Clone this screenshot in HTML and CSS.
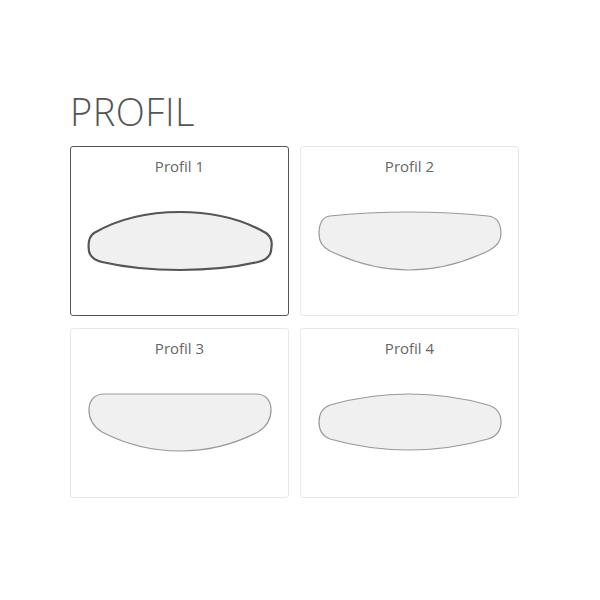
FILE: index.html
```html
<!DOCTYPE html>
<html lang="fr">
<head>
    <meta charset="UTF-8">
    <meta name="viewport" content="width=device-width, initial-scale=1.0">
    <title>Profil</title>
    <link rel="stylesheet" href="styles.css">
</head>
<body>

    <div class="page">
        <h1>PROFIL</h1>

        <!-- choix du profil -->
        <div class="grid">
            <div class="card selected">
                <div class="label">Profil 1</div>
                <svg class="shape" viewBox="0 0 184 62" width="184" height="62">
                    <path d="M 6,22 C 30,8 60,1 92,1 C 124,1 154,8 178,22 C 185,27 184,34 183,40 C 182,46 178,49 170,51 C 145,57 120,59 92,59 C 64,59 40,57 14,51 C 6,49 2,46 1,40 C 0,33 0,26 6,22 Z"/>
                </svg>
            </div>
            <div class="card">
                <div class="label">Profil 2</div>
                <svg class="shape" viewBox="0 0 184 62" width="184" height="62">
                    <path d="M 12,5 C 40,2 65,1 91,1 C 117,1 142,2 170,5 C 180,6 183,14 183,23 C 183,31 178,36 170,40 C 145,52 120,59 91,59 C 62,59 37,52 12,40 C 4,36 1,31 1,23 C 1,14 4,6 12,5 Z"/>
                </svg>
            </div>
            <div class="card">
                <div class="label">Profil 3</div>
                <svg class="shape" viewBox="0 0 184 62" width="184" height="62">
                    <path d="M 16,1 L 168,1 C 178,1 183,8 183,17 C 183,26 178,34 170,39 C 145,52 120,58 92,58 C 64,58 39,52 14,39 C 6,34 1,26 1,17 C 1,8 6,1 16,1 Z"/>
                </svg>
            </div>
            <div class="card">
                <div class="label">Profil 4</div>
                <svg class="shape" viewBox="0 0 184 62" width="184" height="62">
                    <path d="M 12,12 C 40,4 65,1 91,1 C 117,1 142,4 170,12 C 180,15 183,22 183,29 C 183,36 180,43 170,46 C 142,54 117,57 91,57 C 65,57 40,54 12,46 C 4,43 1,36 1,29 C 1,22 4,15 12,12 Z"/>
                </svg>
            </div>
        </div>
    </div>

</body>
</html>
```

FILE: styles.css
```css
body {
    margin: 0;
    font-family: "Open Sans", Arial, sans-serif;
    background-color: #fff;
}
.page {
    padding: 88px 0 0 70px;
}
h1 {
    margin: 0 0 12px 0;
    font-size: 38px;
    font-weight: 300;
    line-height: 46px;
    color: #555;
    letter-spacing: 0.5px;
}
.grid {
    display: grid;
    grid-template-columns: 219px 219px;
    grid-auto-rows: 170px;
    gap: 12px 11px;
}
.card {
    box-sizing: border-box;
    border: 1px solid #e8e8e8;
    border-radius: 3px;
    text-align: center;
}
.card.selected {
    border-color: #555;
}
.label {
    margin-top: 9px;
    font-size: 15px;
    line-height: 20px;
    color: #666;
}
.shape {
    display: block;
    margin: 35px auto 0 auto;
    overflow: visible;
}
.shape path {
    fill: #f0f0f0;
    stroke: #999;
    stroke-width: 1.2;
}
.selected .shape path {
    stroke: #555;
    stroke-width: 2.2;
}
```
